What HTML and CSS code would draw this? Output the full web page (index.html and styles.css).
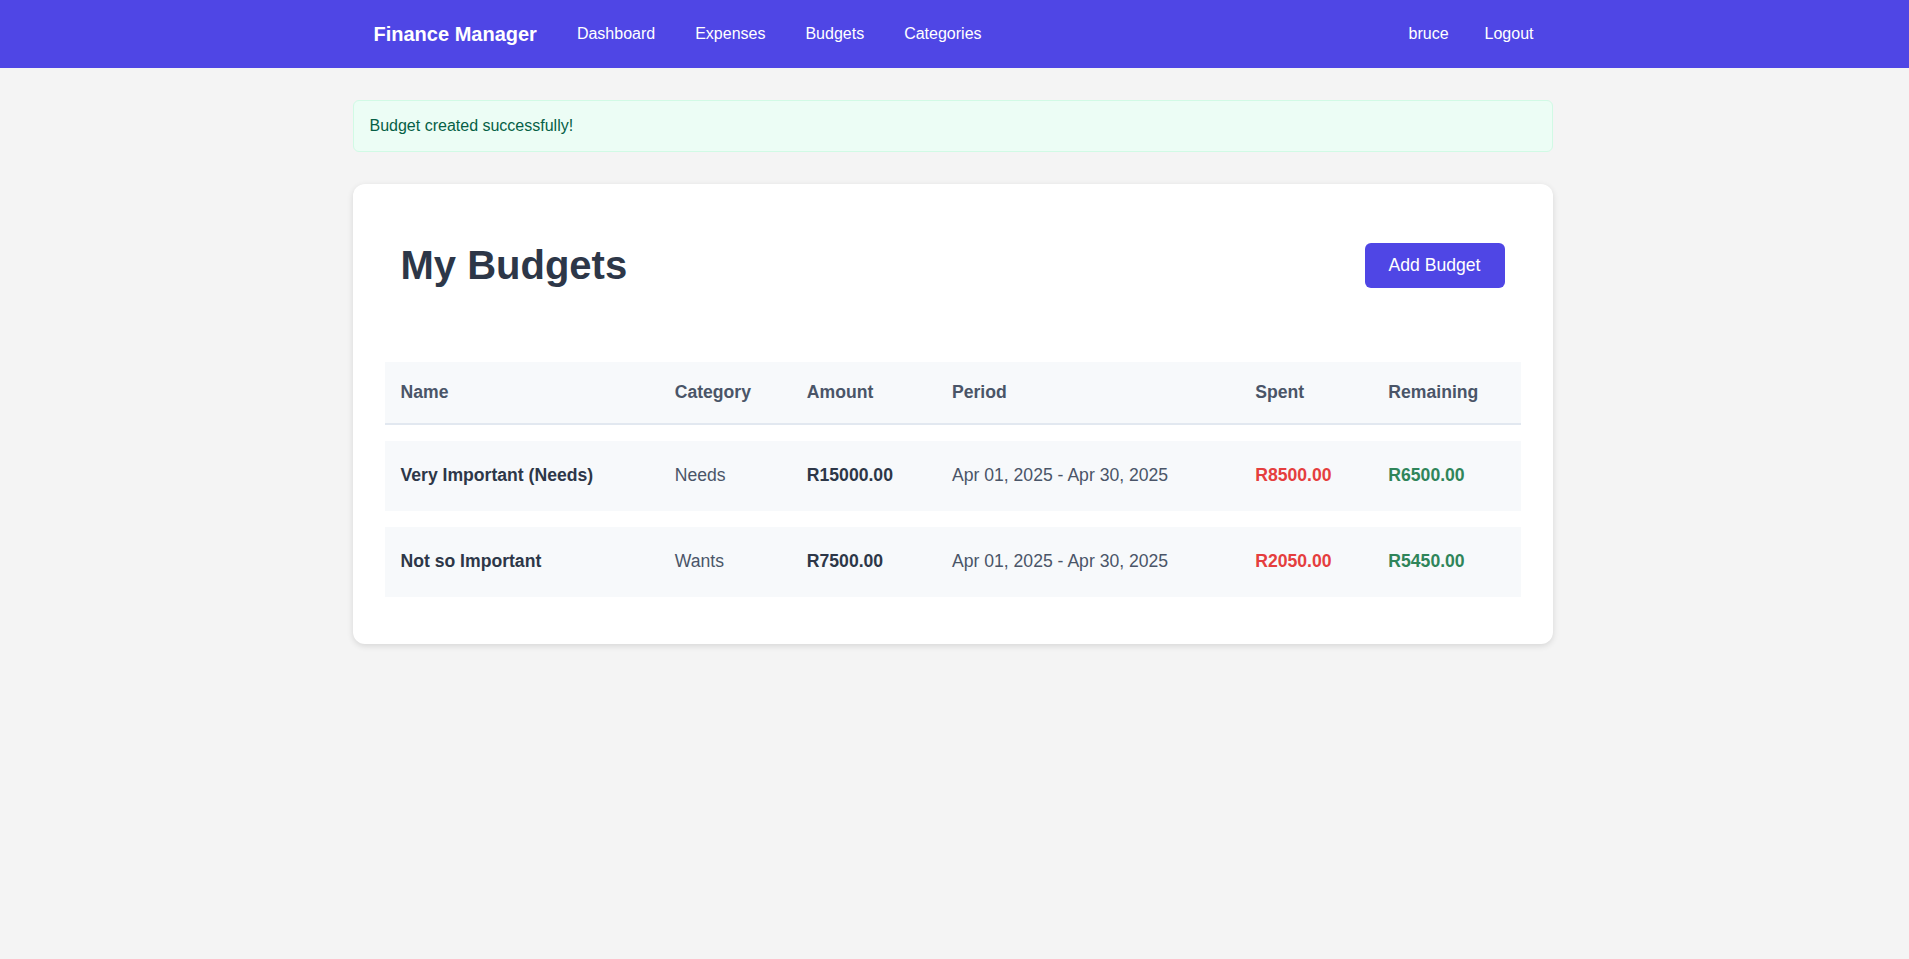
FILE: index.html
```html
<!DOCTYPE html>
<html lang="en">
<head>
<meta charset="utf-8">
<title>My Budgets - Finance Manager</title>
<link rel="stylesheet" href="styles.css">
</head>
<body>
<nav class="navbar">
  <div class="nav-inner">
    <div class="nav-left">
      <a class="brand" href="#">Finance Manager</a>
      <a class="nav-link" href="#">Dashboard</a>
      <a class="nav-link" href="#">Expenses</a>
      <a class="nav-link" href="#">Budgets</a>
      <a class="nav-link" href="#">Categories</a>
    </div>
    <div class="nav-right">
      <span class="nav-user">bruce</span>
      <a class="nav-link" href="#">Logout</a>
    </div>
  </div>
</nav>
<main class="container">
  <div class="alert">Budget created successfully!</div>
  <section class="card">
    <div class="card-header">
      <h1 class="title">My Budgets</h1>
      <a class="btn" href="#">Add Budget</a>
    </div>
    <table class="budget-table">
      <colgroup>
        <col class="c-name">
        <col class="c-cat">
        <col class="c-amt">
        <col class="c-period">
        <col class="c-spent">
        <col class="c-rem">
      </colgroup>
      <thead>
        <tr>
          <th>Name</th>
          <th>Category</th>
          <th>Amount</th>
          <th>Period</th>
          <th>Spent</th>
          <th>Remaining</th>
        </tr>
      </thead>
      <tbody>
        <tr>
          <td class="strong">Very Important (Needs)</td>
          <td>Needs</td>
          <td class="strong">R15000.00</td>
          <td>Apr 01, 2025 - Apr 30, 2025</td>
          <td class="spent">R8500.00</td>
          <td class="remaining">R6500.00</td>
        </tr>
        <tr>
          <td class="strong">Not so Important</td>
          <td>Wants</td>
          <td class="strong">R7500.00</td>
          <td>Apr 01, 2025 - Apr 30, 2025</td>
          <td class="spent">R2050.00</td>
          <td class="remaining">R5450.00</td>
        </tr>
      </tbody>
    </table>
  </section>
</main>
</body>
</html>
```
FILE: styles.css
```css
* { box-sizing: border-box; }
html, body { margin: 0; padding: 0; }
body {
  font-family: "Liberation Sans", Arial, sans-serif;
  font-size: 16px;
  background: #f4f4f4;
  color: #2d3748;
  min-height: 100vh;
}
a { text-decoration: none; }

.navbar {
  background: #4f46e5;
  height: 68px;
}
.nav-inner {
  max-width: 1200px;
  margin: 0 auto;
  height: 100%;
  padding: 0 21px 0 19px;
  display: flex;
  align-items: center;
  justify-content: space-between;
}
.nav-left, .nav-right {
  display: flex;
  align-items: center;
}
.nav-left { gap: 40px; }
.nav-right { gap: 36px; }
.brand {
  color: #fff;
  font-weight: bold;
  font-size: 20px;
}
.nav-link, .nav-user {
  color: #fff;
  font-size: 16px;
}

.container {
  width: 1200px;
  margin: 32px calc(50% - 598px) 0 calc(50% - 602px);
}
.alert {
  background: #ecfdf5;
  border: 1px solid #d1fae5;
  color: #065f46;
  border-radius: 6px;
  padding: 16px;
  font-size: 16px;
  line-height: 18px;
  margin-bottom: 32px;
}
.card {
  background: #fff;
  border-radius: 12px;
  box-shadow: 0 2px 6px rgba(0,0,0,0.12);
  padding: 32px 32px 31px;
}
.card-header {
  display: flex;
  align-items: center;
  justify-content: space-between;
  padding: 26px 16px 0 16px;
  margin-bottom: 58px;
}
.title {
  margin: 0;
  font-size: 40px;
  line-height: 46px;
  font-weight: bold;
  color: #2d3748;
}
.btn {
  display: inline-block;
  background: #4f46e5;
  color: #fff;
  font-size: 17.6px;
  line-height: 21px;
  padding: 12px 24px;
  border-radius: 6px;
}

.budget-table {
  width: 100%;
  table-layout: fixed;
  border-collapse: separate;
  border-spacing: 0 16px;
  font-size: 17.6px;
}
.c-name { width: 274px; }
.c-cat { width: 132px; }
.c-amt { width: 145px; }
.c-period { width: 303px; }
.c-spent { width: 133px; }
.c-rem { width: 148px; }
.budget-table th {
  text-align: left;
  background: #f7f9fb;
  color: #4a5568;
  font-weight: bold;
  padding: 20px 16px 20px;
  line-height: 21px;
  border-bottom: 2px solid #e2e8f0;
}
.budget-table td {
  background: #f7f9fb;
  color: #4a5568;
  padding: 24px 16px 25px;
  line-height: 21px;
}
.budget-table td.strong {
  font-weight: bold;
  color: #2d3748;
}
.budget-table td.spent {
  font-weight: bold;
  color: #e53e3e;
}
.budget-table td.remaining {
  font-weight: bold;
  color: #2f855a;
}
```
